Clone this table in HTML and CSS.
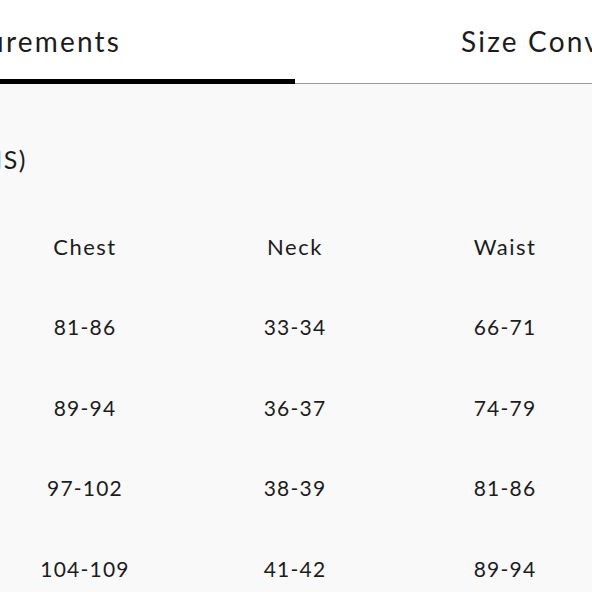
FILE: index.html
```html
<!DOCTYPE html>
<html lang="en">
<head>
<meta charset="utf-8">
<title>Size Guide</title>
<link rel="stylesheet" href="styles.css">
</head>
<body>
<div class="page">
  <div class="tabs">
    <div class="tab active">Measurements</div>
    <div class="tab second">Size Conversion</div>
  </div>
  <div class="content">
    <div class="title-row"><div class="title">Body Measurements (CMS)</div></div>
    <div class="table">
      <div class="row head">
        <div class="cell">Size</div><div class="cell">Chest</div><div class="cell">Neck</div><div class="cell">Waist</div><div class="cell">Hips</div>
      </div>
      <div class="row">
        <div class="cell">XS</div><div class="cell">81-86</div><div class="cell">33-34</div><div class="cell">66-71</div><div class="cell">84-89</div>
      </div>
      <div class="row">
        <div class="cell">S</div><div class="cell">89-94</div><div class="cell">36-37</div><div class="cell">74-79</div><div class="cell">91-96</div>
      </div>
      <div class="row">
        <div class="cell">M</div><div class="cell">97-102</div><div class="cell">38-39</div><div class="cell">81-86</div><div class="cell">99-104</div>
      </div>
      <div class="row">
        <div class="cell">L</div><div class="cell">104-109</div><div class="cell">41-42</div><div class="cell">89-94</div><div class="cell">107-112</div>
      </div>
    </div>
  </div>
</div>
</body>
</html>
```

FILE: styles.css
```css
html, body {
  margin: 0;
  padding: 0;
}
body {
  background: #f9f9f9;
  overflow: hidden;
  font-family: Lato, "Open Sans", sans-serif;
  color: #1c1c1c;
}
.page {
  width: 1080px;
  margin-left: -245px;
}
.tabs {
  display: flex;
  background: #fff;
  border-bottom: 1px solid #9a9a9a;
  height: 84px;
  box-sizing: border-box;
}
.tab {
  flex: none;
  width: 50%;
  text-align: center;
  font-size: 28px;
  letter-spacing: 2.2px;
  padding-top: 24px;
  box-sizing: border-box;
  white-space: nowrap;
}
.tab.active {
  border-bottom: 5px solid #000;
  margin-bottom: -1px;
  padding-right: 16px;
}
.tab.second {
  padding-left: 20px;
}
.content {
  padding-top: 40px;
}
.title-row {
  display: flex;
  justify-content: flex-end;
  width: 272px;
}
.title {
  flex: none;
  font-size: 25px;
  letter-spacing: 1.5px;
  line-height: 70px;
  white-space: nowrap;
}
.table {
  padding-left: 15px;
  margin-top: 12px;
}
.row {
  display: grid;
  grid-template-columns: repeat(5, 210px);
  height: 80.5px;
  align-items: center;
}
.cell {
  text-align: center;
  font-size: 21px;
  letter-spacing: 1.2px;
  white-space: nowrap;
}
.head .cell {
  font-size: 22px;
  letter-spacing: 1.5px;
}
```
